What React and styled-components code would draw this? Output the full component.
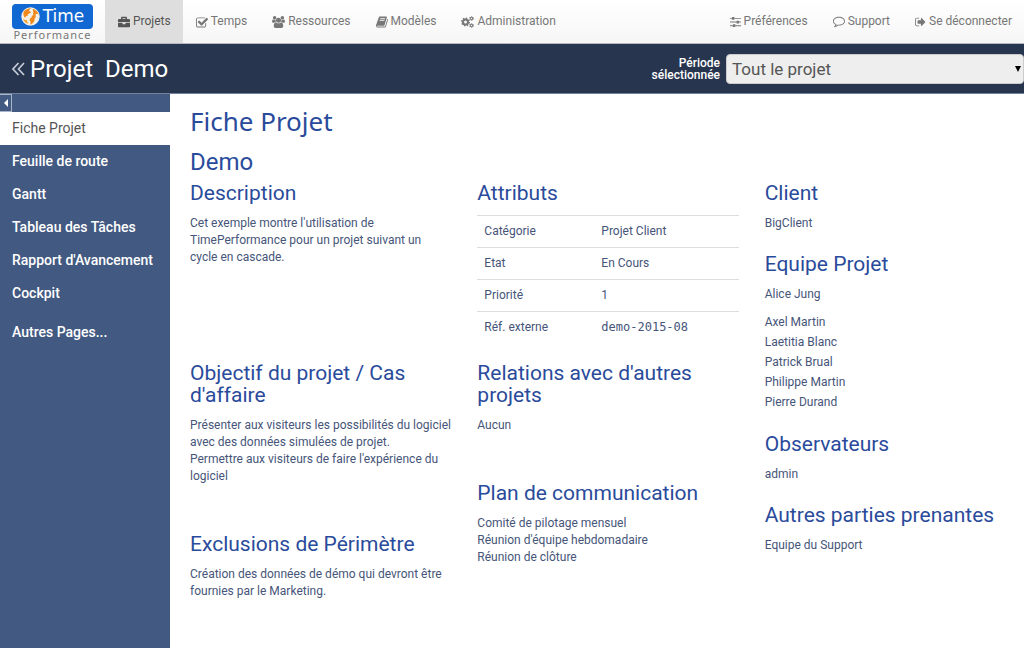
import styled, { createGlobalStyle } from 'styled-components';
import { FaBriefcase } from 'react-icons/fa';

const App = () => {
	return (
		<>
			<GlobalStyle />
			<Page>
				<TopBar>
					<LogoLink href="#accueil" aria-label="Time Performance">
						<LogoBadge>
							<Globe />
							<LogoTime>Time</LogoTime>
						</LogoBadge>
						<LogoPerformance>Performance</LogoPerformance>
					</LogoLink>
					<Nav>
						<NavItem href="#projets" $active>
							<FaBriefcase />
							Projets
						</NavItem>
						<NavItem href="#temps">
							<CheckIcon />
							Temps
						</NavItem>
						<NavItem href="#ressources">
							<UsersIcon />
							Ressources
						</NavItem>
						<NavItem href="#modeles">
							<BookIcon />
							Modèles
						</NavItem>
						<NavItem href="#administration">
							<CogsIcon />
							Administration
						</NavItem>
					</Nav>
					<Nav>
						<NavItem href="#preferences">
							<SlidersIcon />
							Préférences
						</NavItem>
						<NavItem href="#support">
							<CommentIcon />
							Support
						</NavItem>
						<NavItem href="#deconnexion">
							<SignOutIcon />
							Se déconnecter
						</NavItem>
					</Nav>
				</TopBar>

				<ProjectBar>
					<ProjectTitle>
						<BackLink href="#retour" aria-label="Retour">
							<DoubleAngle />
						</BackLink>
						<span>Projet</span>
						<span>Demo</span>
					</ProjectTitle>
					<Period>
						<PeriodLabel htmlFor="periode">Période sélectionnée</PeriodLabel>
						<PeriodBox>
							<PeriodSelect id="periode">
								<option>Tout le projet</option>
							</PeriodSelect>
						</PeriodBox>
					</Period>
				</ProjectBar>

				<Body>
					<SideBar>
						<Collapse type="button" aria-label="Réduire le menu" />
						{menu.map(item => (
							<MenuItem key={item} href="#page" $active={item === 'Fiche Projet'}>
								{item}
							</MenuItem>
						))}
						<OtherPages href="#autres">Autres Pages...</OtherPages>
					</SideBar>

					<Content>
						<PageTitle>Fiche Projet</PageTitle>
						<ProjectName>Demo</ProjectName>
						<Columns>
							<MainGrid>
								<Tall>
									<Heading>Description</Heading>
									<Text>
										Cet exemple montre l'utilisation de TimePerformance pour un projet
										suivant un cycle en cascade.
									</Text>
								</Tall>
								<Tall>
									<Heading>Attributs</Heading>
									<Table>
										<tbody>
											{attributes.map(([name, value]) => (
												<tr key={name}>
													<th scope="row">{name}</th>
													<td>{name === 'Réf. externe' ? <Code>{value}</Code> : value}</td>
												</tr>
											))}
										</tbody>
									</Table>
								</Tall>
							</MainGrid>
							<MainGrid>
								<Stack>
									<section>
										<Heading>Objectif du projet / Cas d'affaire</Heading>
										<Text>
											Présenter aux visiteurs les possibilités du logiciel avec des données
											simulées de projet.
											<br />
											Permettre aux visiteurs de faire l'expérience du logiciel
										</Text>
									</section>
									<section>
										<Heading>Exclusions de Périmètre</Heading>
										<Text>
											Création des données de démo qui devront être fournies par le
											Marketing.
										</Text>
									</section>
								</Stack>
								<Stack>
									<section>
										<Heading>Relations avec d'autres projets</Heading>
										<Text>Aucun</Text>
									</section>
									<section>
										<Heading>Plan de communication</Heading>
										<Text>
											Comité de pilotage mensuel
											<br />
											Réunion d'équipe hebdomadaire
											<br />
											Réunion de clôture
										</Text>
									</section>
								</Stack>
							</MainGrid>
							<People>
								<section>
									<Heading>Client</Heading>
									<Text>BigClient</Text>
								</section>
								<section>
									<Heading>Equipe Projet</Heading>
									<Text>Alice Jung</Text>
									<Members>
										{members.map(name => (
											<li key={name}>{name}</li>
										))}
									</Members>
								</section>
								<section>
									<Heading>Observateurs</Heading>
									<Text>admin</Text>
								</section>
								<section>
									<Heading>Autres parties prenantes</Heading>
									<Text>Equipe du Support</Text>
								</section>
							</People>
						</Columns>
					</Content>
				</Body>
			</Page>
		</>
	);
};

const menu = [
	'Fiche Projet',
	'Feuille de route',
	'Gantt',
	'Tableau des Tâches',
	"Rapport d'Avancement",
	'Cockpit',
];

const attributes = [
	['Catégorie', 'Projet Client'],
	['Etat', 'En Cours'],
	['Priorité', '1'],
	['Réf. externe', 'demo-2015-08'],
];

const members = [
	'Axel Martin',
	'Laetitia Blanc',
	'Patrick Brual',
	'Philippe Martin',
	'Pierre Durand',
];

const Globe = () => (
	<svg width="19" height="19" viewBox="0 0 19 19" aria-hidden="true">
		<circle cx="9.5" cy="9.5" r="9.2" fill="#f6f1e6" />
		<path d="M2.500 5C4.500 2.200 7.500 1 10.500 1.300 8.500 2.200 7.800 3.200 8.300 4.300c1.200.2 1.800.8 1.500 1.700-2 .2-3.300 1.200-3.300 3-1.500-.2-2.300.6-2.200 2C2.800 10 2 7.500 2.500 5z" fill="#f08a1c" />
		<path d="M12 1.800c3 .9 5 3.200 5.700 6-1.200-1.200-2.400-1.300-3.200-.3.6 1.800.2 3.300-1 4.300.3 2.700-1.300 4.800-4.500 6 .9-1.700.8-3-.3-4-.2-1.600.4-2.700 1.900-3.200-.2-1.300.4-2.200 1.900-2.700-.9-1-.8-1.900.3-2.600-1-.9-1.300-2.100-.8-3.500z" fill="#f08a1c" />
		<path d="M2 11.500c1.500 1.600 2.800 1.500 4 1.500 0 1.500.5 2.500 1.500 3.800C4.800 16.500 2.800 14.500 2 11.500z" fill="#f5a53a" />
	</svg>
);

const CheckIcon = () => (
	<svg width="12" height="12" viewBox="0 0 1664 1536" fill="currentColor" aria-hidden="true">
		<path d="M1408 930v318c0 159-129 288-288 288H288C129 1536 0 1407 0 1248V416c0-159 129-288 288-288h832c40 0 80 8 117 25 9 4 16 13 18 23 2 11-1 21-9 29l-49 49c-8 8-19 11-32 7-15-4-30-5-45-5H288c-88 0-160 72-160 160v832c0 88 72 160 160 160h832c88 0 160-72 160-160V994c0-8 3-16 9-22l64-64c21-21 55-6 55 22zm231-489l-814 814c-31 31-82 31-114 0L281 825c-31-31-31-82 0-114l110-110c31-31 82-31 114 0l263 263 647-647c31-31 82-31 114 0l110 110c31 32 31 83 0 114z" />
	</svg>
);

const UsersIcon = () => (
	<svg width="13" height="12" viewBox="0 0 1920 1792" fill="currentColor" aria-hidden="true">
		<path d="M593 896q-162 5-265 128H194q-82 0-138-40.500T0 865q0-353 124-353 6 0 43.500 21t97.500 42.500T384 597q67 0 133-23-5 37-5 66 0 139 81 256zm1071 637q0 120-73 189.500t-194 69.500H523q-121 0-194-69.500T256 1533q0-53 3.500-103.500t14-109T300 1212t43-97.500 62-81 85.500-53.500T602 960q10 0 43 21.500t73 48 107 48 135 21.500 135-21.500 107-48 73-48 43-21.500q61 0 111.500 20t85.500 53.500 62 81 43 97.500 26.500 108.500 14 109 3.500 103.500zM640 256q0 106-75 181t-181 75-181-75-75-181 75-181T384 0t181 75 75 181zm704 384q0 159-112.500 271.500T960 1024 688.500 911.500 576 640t112.500-271.500T960 256t271.500 112.500T1344 640zm576 225q0 78-56 118.500t-138 40.500h-134q-103-123-265-128 81-117 81-256 0-29-5-66 66 23 133 23 59 0 119-21.500t97.500-42.500 43.500-21q124 0 124 353zm-128-609q0 106-75 181t-181 75-181-75-75-181 75-181 181-75 181 75 75 181z" />
	</svg>
);

const BookIcon = () => (
	<svg width="12" height="12" viewBox="0 64 1664 1664" fill="currentColor" aria-hidden="true">
		<path d="M1639 478q40 57 18 129l-275 906q-19 64-76.500 107.500T1183 1664H260q-77 0-148.500-53.500T12 1479q-24-67-2-127 0-4 3-27t4-37q1-8-3-21.500t-3-19.500q2-11 8-21t16.500-23.500T52 1179q23-38 45-91.500t30-91.500q3-10 .5-30t-.5-28q3-11 17-28t17-23q21-36 42-92t25-90q1-9-2.500-32t.5-28q4-13 22-30.500t22-22.500q19-26 42.500-84.500T339 411q1-8-3-25.500t-2-26.500q2-8 9-18t18-23 17-21q8-12 16.500-30.500t15-35 16-36 19.500-32T470.500 140t36-11.500T554 134l-1 3q38-9 51-9h761q74 0 114 56t18 130l-274 906q-36 119-71.500 153.500T1023 1408H154q-27 0-38 15-11 16-1 43 24 70 144 70h923q29 0 56-15.500t35-41.500l300-987q7-22 5-57 38 15 59 43zm-1064 2q-4 13 2 22.500t20 9.500h608q13 0 25.500-9.500T1247 480l21-64q4-13-2-22.500t-20-9.500H638q-13 0-25.500 9.500T596 416zm-83 256q-4 13 2 22.500t20 9.500h608q13 0 25.500-9.500T1164 736l21-64q4-13-2-22.500t-20-9.500H555q-13 0-25.500 9.500T513 672z" />
	</svg>
);

// each gear is a ring plus a dashed ring for the teeth
const CogsIcon = () => (
	<svg width="13" height="12" viewBox="0 0 26 24" fill="none" stroke="currentColor" aria-hidden="true">
		<circle cx="9" cy="12" r="5" strokeWidth="4" />
		<circle cx="9" cy="12" r="7.500" strokeWidth="3" pathLength="16" strokeDasharray="1 1" />
		<circle cx="21" cy="5" r="2.500" strokeWidth="2.200" />
		<circle cx="21" cy="5" r="4" strokeWidth="1.600" pathLength="12" strokeDasharray="1 1" />
		<circle cx="21" cy="19" r="2.500" strokeWidth="2.200" />
		<circle cx="21" cy="19" r="4" strokeWidth="1.600" pathLength="12" strokeDasharray="1 1" />
	</svg>
);

const SlidersIcon = () => (
	<svg width="11" height="12" viewBox="0 0 1536 1408" fill="currentColor" aria-hidden="true">
		<path d="M352 1152v128H0v-128zm352-128c35 0 64 29 64 64v256c0 35-29 64-64 64H448c-35 0-64-29-64-64v-256c0-35 29-64 64-64zm160-384v128H0V640zM224 128v128H0V128zm1312 1024v128H800v-128zM576 0c35 0 64 29 64 64v256c0 35-29 64-64 64H320c-35 0-64-29-64-64V64c0-35 29-64 64-64zm640 512c35 0 64 29 64 64v256c0 35-29 64-64 64H960c-35 0-64-29-64-64V576c0-35 29-64 64-64zm320 128v128h-224V640zm0-512v128H672V128z" />
	</svg>
);

const CommentIcon = () => (
	<svg width="12" height="12" viewBox="0 0 1792 1536" fill="currentColor" aria-hidden="true">
		<path d="M896 128C479 128 128 363 128 640c0 158 112 309 307 412l87 50-27 96c-17 64-39 115-64 160 97-40 184-94 262-162l43-38 57 6c34 4 69 6 103 6 417 0 768-235 768-512S1313 128 896 128zm896 512c0 354-401 640-896 640-40 0-79-2-117-7-131 117-287 198-460 242-36 10-75 17-114 22-23 2-43-14-49-37-5-29 13-45 29-64 62-70 133-129 179-294C143 1025 0 844 0 640 0 287 401 0 896 0s896 287 896 640z" />
	</svg>
);

const SignOutIcon = () => (
	<svg width="11" height="12" viewBox="0 0 1664 1536" fill="currentColor" aria-hidden="true">
		<path d="M640 1312c0 50 13 96-32 96H288C129 1408 0 1279 0 1120V416C0 257 129 128 288 128h320c18 0 32 14 32 32 0 50 13 96-32 96H288c-88 0-160 72-160 160v704c0 88 72 160 160 160h288c25 0 64-5 64 32zm928-544c0 17-7 33-19 45l-544 544c-12 12-28 19-45 19-35 0-64-29-64-64v-288H448c-35 0-64-29-64-64V576c0-35 29-64 64-64h448V224c0-35 29-64 64-64 17 0 33 7 45 19l544 544c12 12 19 28 19 45z" />
	</svg>
);

const DoubleAngle = () => (
	<svg width="13" height="14" viewBox="0 0 13 14" aria-hidden="true">
		<path d="M6.500 1L1 7l5.500 6M12 1L6.500 7l5.500 6" fill="none" stroke="#c5cad6" strokeWidth="1.700" />
	</svg>
);

const GlobalStyle = createGlobalStyle`
	* {
		box-sizing: border-box;
	}

	body {
		margin: 0;
		background: #fff;
		color: #465579;
		font-family: Roboto, 'Liberation Sans', sans-serif;
		font-size: 12px;
		line-height: 17px;
	}

	a {
		text-decoration: none;
	}
`;

const Page = styled.div`
	display: flex;
	flex-direction: column;
	min-height: 100vh;
`;

const TopBar = styled.header`
	display: flex;
	height: 44px;
	border-bottom: 1px solid #b5b9c0;
	background: linear-gradient(#fff, #f6f6f6);
`;

const LogoLink = styled.a`
	display: flex;
	flex-direction: column;
	align-items: center;
	width: 81px;
	margin: 4px 12px 0;
`;

const LogoBadge = styled.span`
	display: flex;
	align-items: center;
	justify-content: center;
	gap: 3px;
	width: 100%;
	height: 25px;
	border-radius: 4px;
	background: #1268d2;
`;

const LogoTime = styled.span`
	color: #fff;
	font-family: 'DejaVu Sans', sans-serif;
	font-size: 17px;
`;

const LogoPerformance = styled.span`
	color: #777;
	font-family: 'Noto Sans', sans-serif;
	font-size: 11px;
	line-height: 12px;
	letter-spacing: 1px;
`;

const Nav = styled.nav`
	display: flex;

	& + & {
		margin-left: auto;
	}
`;

const NavItem = styled.a`
	display: flex;
	align-items: center;
	gap: 3px;
	padding: 0 12px 0 13px;
	background: ${props => (props.$active ? '#dedede' : 'transparent')};
	color: ${props => (props.$active ? '#555' : '#777')};
	white-space: nowrap;
`;

const ProjectBar = styled.div`
	display: flex;
	align-items: center;
	justify-content: space-between;
	height: 50px;
	border-bottom: 1px solid #71819c;
	background: #27354f;
	color: #fff;
`;

const ProjectTitle = styled.h1`
	display: flex;
	align-items: center;
	gap: 12px;
	margin: 0;
	padding-left: 12px;
	font-size: 24px;
	line-height: 32px;
	font-weight: 400;
`;

const BackLink = styled.a`
	display: flex;
	margin-right: -7px;
`;

const Period = styled.div`
	display: flex;
	align-items: center;
	gap: 6px;
`;

const PeriodLabel = styled.label`
	width: 70px;
	font-weight: 500;
	line-height: 12px;
	text-align: right;
`;

const PeriodBox = styled.div`
	display: flex;
	align-items: center;
	width: 298px;

	&::after {
		content: '';
		width: 0;
		margin-left: -9px;
		border: 3px solid transparent;
		border-top: 6px solid #000;
		border-bottom: 0;
		pointer-events: none;
	}
`;

const PeriodSelect = styled.select`
	appearance: none;
	flex: none;
	width: 100%;
	height: 30px;
	padding: 0 5px;
	border: 1px solid #ccc;
	border-radius: 4px;
	background: #eee;
	color: #555;
	font-family: inherit;
	font-size: 17px;
`;

const Body = styled.div`
	display: flex;
	flex: 1;
`;

const SideBar = styled.nav`
	display: flex;
	flex-direction: column;
	flex: none;
	width: 170px;
	background: #425981;
`;

const Collapse = styled.button`
	display: flex;
	align-items: center;
	justify-content: center;
	width: 12px;
	height: 18px;
	padding: 0;
	border: 1px solid #a9b5c9;
	border-left: 0;
	background: #425981;

	&::before {
		content: '';
		border: 4px solid transparent;
		border-right-color: #fff;
		border-left: 0;
	}
`;

const MenuItem = styled.a`
	padding: 8px 12px;
	background: ${props => (props.$active ? '#fff' : 'transparent')};
	color: ${props => (props.$active ? '#555' : '#fff')};
	font-size: 14px;
	font-weight: ${props => (props.$active ? 400 : 500)};
	line-height: 17px;
`;

const OtherPages = styled(MenuItem)`
	margin-top: 6px;
`;

const Content = styled.main`
	flex: 1;
	min-width: 0;
	padding: 11px 24px 24px 20px;
`;

const PageTitle = styled.h2`
	margin: 0 0 9px;
	color: #2a4b9b;
	font-family: 'Noto Sans', sans-serif;
	font-size: 26px;
	font-weight: 400;
	line-height: 32px;
`;

const ProjectName = styled.h3`
	margin: 0 0 4px;
	color: #2a4b9b;
	font-size: 24px;
	font-weight: 400;
	line-height: 32px;
`;

const Columns = styled.div`
	display: grid;
	grid-template-columns: 548fr 235fr;
	grid-template-rows: auto 1fr;
	column-gap: 26px;
`;

const MainGrid = styled.div`
	display: grid;
	grid-template-columns: 1fr 1fr;
	column-gap: 26px;
	grid-column: 1;
`;

const Tall = styled.section`
	min-height: 180px;
`;

const Stack = styled.div`
	display: flex;
	flex-direction: column;
	gap: 48px;
`;

const Heading = styled.h4`
	margin: 0 0 11px;
	color: #2a4b9b;
	font-size: 21px;
	font-weight: 400;
	line-height: 22px;
`;

const Text = styled.p`
	margin: 0;
`;

const Table = styled.table`
	width: 100%;
	border-collapse: collapse;
	table-layout: fixed;

	th,
	td {
		height: 32px;
		padding: 0 7px;
		border-top: 1px solid #ddd;
		font-weight: 400;
		text-align: left;
	}

	th {
		width: 117px;
	}
`;

const Code = styled.span`
	font-family: 'DejaVu Sans Mono', monospace;
`;

const People = styled.aside`
	display: flex;
	flex-direction: column;
	gap: 21px;
	grid-column: 2;
	grid-row: 1 / span 2;
`;

const Members = styled.ul`
	margin: 9px 0 0;
	padding: 0;
	line-height: 20px;
	list-style: none;
`;

export default App;
